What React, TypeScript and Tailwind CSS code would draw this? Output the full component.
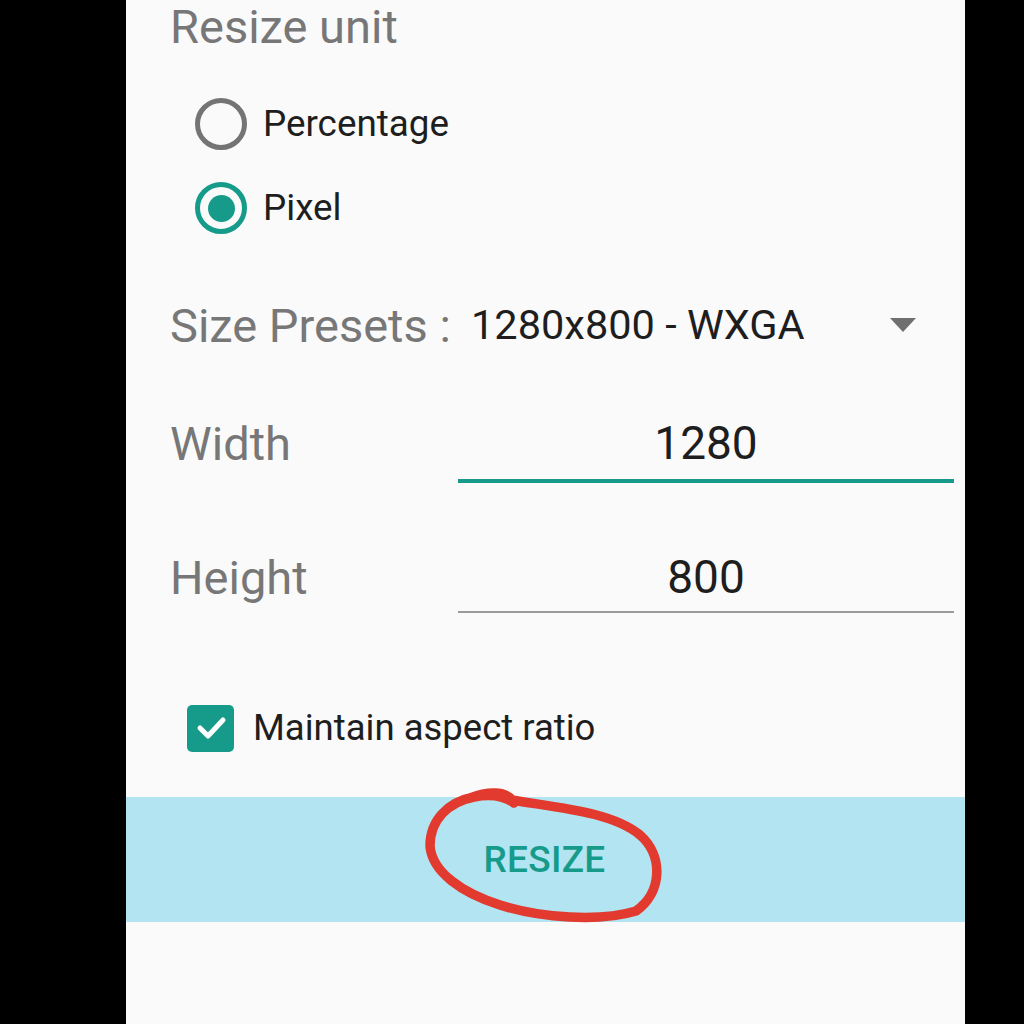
import React from "react";

const TEAL = "#169b8b";

export default function App() {
  return (
    <div className="relative flex h-[1024px] w-[1024px] overflow-hidden bg-black" style={{ fontFamily: "Roboto, 'Noto Sans', sans-serif" }}>
      <div className="w-[126px] shrink-0 bg-black" />
      <div className="flex w-[839px] shrink-0 flex-col bg-[#fafafa]">
        <div className="pl-[44px] pr-[11px]">
          <div className="h-[53px] text-[47px] leading-[53px] text-[#777777]">Resize unit</div>

          <div className="mt-[29px] pl-[25px]">
            <div className="flex h-[84px] items-center">
              <div className="h-[52px] w-[52px] rounded-full border-[5px] border-[#747474]" />
              <span className="ml-[16px] text-[36.8px] leading-none text-[#1e1e1e]">Percentage</span>
            </div>
            <div className="flex h-[84px] items-center">
              <div className="flex h-[52px] w-[52px] items-center justify-center rounded-full border-[5px] border-[#169b8b]">
                <div className="h-[27px] w-[27px] rounded-full bg-[#169b8b]" />
              </div>
              <span className="ml-[16px] text-[36.8px] leading-none text-[#1e1e1e]">Pixel</span>
            </div>
          </div>

          <div className="mt-[43px] flex h-[64px] items-center">
            <div className="w-[301px] text-[47px] leading-none text-[#777777]">Size Presets :</div>
            <div className="flex-1 text-[41.5px] leading-none text-[#1e1e1e]">1280x800 - WXGA</div>
            <svg width="26" height="14" viewBox="0 0 26 14" className="mr-[38px]">
              <path d="M0 0 L26 0 L13 14 Z" fill="#6f6f6f" />
            </svg>
          </div>

          <div className="mt-[54px] flex items-start">
            <div className="flex h-[64px] w-[288px] items-center text-[47px] leading-none text-[#777777]">Width</div>
            <div className="flex h-[72px] flex-1 items-center justify-center border-b-4 border-[#169b8b] pb-1 text-[46px] leading-none text-[#1e1e1e]">
              1280
            </div>
          </div>

          <div className="mt-[62px] flex items-start">
            <div className="flex h-[64px] w-[288px] items-center text-[47px] leading-none text-[#777777]">Height</div>
            <div className="flex h-[68px] flex-1 items-center justify-center border-b-2 border-[#9a9a9a] pb-[2px] text-[46px] leading-none text-[#1e1e1e]">
              800
            </div>
          </div>

          <div className="mt-[83px] flex h-[64px] items-center pl-[17px]">
            <div className="flex h-[47px] w-[47px] items-center justify-center rounded-[5px] bg-[#169b8b]">
              <svg width="36" height="36" viewBox="0 0 36 36">
                <path d="M7 18 L15 26 L30 10" fill="none" stroke="white" strokeWidth="5" strokeLinecap="round" strokeLinejoin="round" />
              </svg>
            </div>
            <span className="ml-[19px] text-[36.5px] leading-none text-[#1e1e1e]">Maintain aspect ratio</span>
          </div>
        </div>

        <div className="mt-[37px] flex h-[125px] items-center justify-center bg-[#b2e4f2]">
          <span className="-ml-[2px] text-[37px] font-medium leading-none tracking-[0.3px]" style={{ color: TEAL }}>RESIZE</span>
        </div>
        <div className="flex-1" />
      </div>
      <div className="flex-1 bg-black" />

      <svg className="pointer-events-none absolute left-0 top-0" width="1024" height="1024" viewBox="0 0 1024 1024">
        <path
          d="M470 798 C488 791 505 791 512 800 C560 808 612 812 640 835 C664 856 662 893 636 911 C600 922 540 918 500 905 C462 893 432 872 430 846 C430 820 448 802 474 797 C490 794 504 796 514 803"
          fill="none"
          stroke="#e23a2e"
          strokeWidth="9.5"
          strokeLinecap="round"
          strokeLinejoin="round"
        />
      </svg>
    </div>
  );
}
